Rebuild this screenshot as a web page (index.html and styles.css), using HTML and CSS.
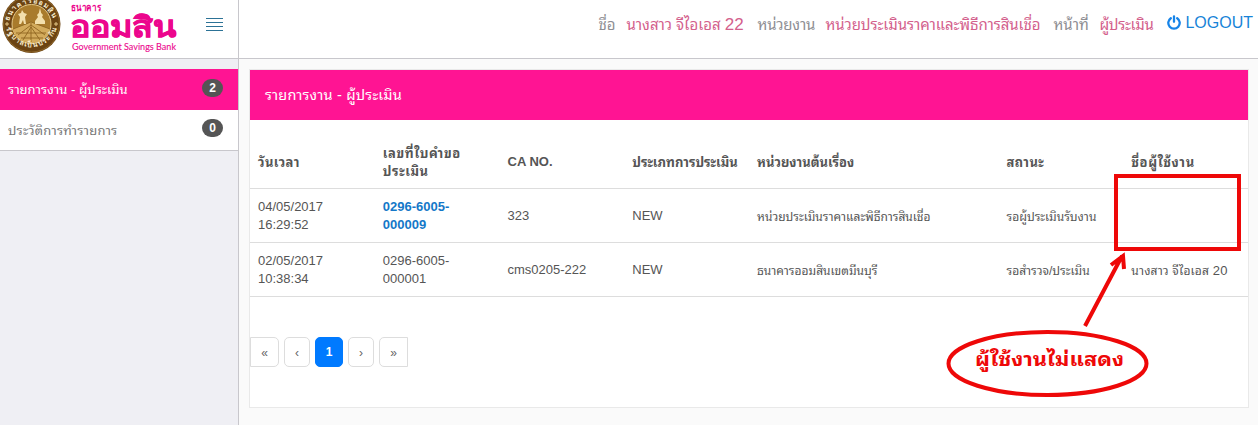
FILE: index.html
```
<!DOCTYPE html>
<html lang="th">
<head>
<meta charset="utf-8">
<title>รายการงาน - ผู้ประเมิน</title>
<link rel="stylesheet" href="styles.css">
</head>
<body>
<div class="app">
  <header class="topbar">
    <div class="brand">
      <svg class="logo" width="190" height="58" viewBox="0 0 190 58">
        <defs>
          <path id="ringTop" d="M9.500 21 A22.500 22.500 0 0 1 53.500 21"/>
          <path id="ringBottom" d="M6 28 A26.500 26.500 0 0 0 57 28"/>
        </defs>
        <circle cx="31.500" cy="24" r="29" fill="#6b4313"/>
        <circle cx="31.500" cy="24" r="28" fill="none" stroke="#8d6529" stroke-width="1"/>
        <circle cx="31.500" cy="24" r="19.500" fill="#a97b2c" stroke="#e5c888" stroke-width="1"/>
        <path d="M13 29l18-7 19 7q-2 13-18 14-16-1-19-14z" fill="#d3ab5c"/>
        <path d="M13 29l18-7 19 7M18 35l13-10 14 10M23 40l8-13 9 13M31 23v20M16 33l30 0M21 38h22" fill="none" stroke="#8f6420" stroke-width=".9"/>
        <path d="M22 10l2 3 3 1-2 3 1 7h-2l-1-4-2 4h-2l1-7-2-3 3-1z" fill="#f3dfac"/>
        <path d="M40 8l1.200 5 1.800 2-1 2 3 4v3h-10v-3l3-4-1-2 1.800-2z" fill="#f3dfac"/>
        <path d="M5 24h4M7 22v4M54 24h4M56 22v4" stroke="#e5c888"/>
        <text class="ring"><textPath href="#ringTop" textLength="58">ธนาคารออมสิน</textPath></text>
        <text class="ring"><textPath href="#ringBottom" textLength="68">รัฐบาลเป็นประกัน</textPath></text>
        <text class="logo-small" x="71" y="11" textLength="30" lengthAdjust="spacingAndGlyphs">ธนาคาร</text>
        <text class="logo-big" x="70" y="37" textLength="107" lengthAdjust="spacingAndGlyphs">ออมสิน</text>
        <text class="logo-en" x="72" y="50" textLength="104" lengthAdjust="spacingAndGlyphs">Government Savings Bank</text>
      </svg>
      <span class="menu"><i></i><i></i><i></i><i></i></span>
    </div>
    <div class="userbar">
      <span class="label l1">ชื่อ</span><span class="value v1">นางสาว จีไอเอส <em>22</em></span>
      <span class="label l2">หน่วยงาน</span><span class="value v2">หน่วยประเมินราคาและพิธีการสินเชื่อ</span>
      <span class="label l3">หน้าที่</span><span class="value v3">ผู้ประเมิน</span>
      <a class="logout"><svg width="14" height="15" viewBox="0 0 14 15" fill="none" stroke="#1784e8" stroke-width="2.300" stroke-linecap="round"><path d="M3.800 3.200A5.700 5.700 0 1 0 10.200 3.200M7 1.300v5.500"/></svg><span>LOGOUT</span></a>
    </div>
  </header>
  <div class="body">
    <nav class="side">
      <a class="item active"><span class="s1">รายการงาน - ผู้ประเมิน</span><b>2</b></a>
      <a class="item"><span class="s2">ประวัติการทำรายการ</span><b>0</b></a>
    </nav>
    <main class="main">
      <section class="panel">
        <h1 class="title"><span>รายการงาน - ผู้ประเมิน</span></h1>
        <div class="table">
          <div class="row head"><span class="loose low">วันเวลา</span><span class="wide low">เลขที่ใบคำขอ<br>ประเมิน</span><span>CA NO.</span><span class="low">ประเภทการประเมิน</span><span class="low">หน่วยงานต้นเรื่อง</span><span class="loose low">สถานะ</span><span class="wide low">ชื่อผู้ใช้งาน</span></div>
          <div class="row"><span>04/05/2017<br>16:29:52</span><span class="link">0296-6005-<br>000009</span><span>323</span><span>NEW</span><span class="th low">หน่วยประเมินราคาและพิธีการสินเชื่อ</span><span class="th low">รอผู้ประเมินรับงาน</span><span></span></div>
          <div class="row"><span>02/05/2017<br>10:38:34</span><span>0296-6005-<br>000001</span><span>cms0205-222</span><span>NEW</span><span class="th low">ธนาคารออมสินเขตมีนบุรี</span><span class="th low">รอสำรวจ/ประเมิน</span><span class="th low name">นางสาว จีไอเอส <em>20</em></span></div>
        </div>
        <div class="pages"><a class="first">«</a><a>‹</a><a class="on">1</a><a>›</a><a class="last">»</a></div>
      </section>
    </main>
  </div>
  <svg class="note" width="310" height="230" viewBox="0 0 310 230" fill="none" stroke="#ee0808" stroke-width="4">
    <rect x="176" y="6" width="123" height="73"/>
    <path d="M145 156L182 86M171 95l12-9 1 13"/>
    <ellipse cx="107.500" cy="193.500" rx="99" ry="31.500"/>
    <text class="note-text" x="35" y="196" textLength="149" lengthAdjust="spacingAndGlyphs">ผู้ใช้งานไม่แสดง</text>
  </svg>
</div>
</body>
</html>
```
FILE: styles.css
```
* { box-sizing: border-box; }
body { margin: 0; background: #fafafa; font-family: "Liberation Sans", "Noto Sans Thai Looped", "Loma", "Waree", "Garuda", "Noto Sans Thai", sans-serif; font-size: 13px; color: #555; }
.app { position: relative; height: 425px; overflow: hidden; display: flex; flex-direction: column; }
.topbar { height: 59px; flex: none; display: flex; background: #fff; border-bottom: 1px solid #c8c7cc; }
.brand { width: 239px; height: 58px; display: flex; border-right: 1px solid #c8c7cc; }
.logo { display: block; flex: none; }
.logo text { fill: #ec068d; font-family: "Liberation Sans", sans-serif; }
.logo text.ring { fill: #f7eccf; font-size: 7px; font-weight: bold; }
.logo .logo-small { font-size: 10px; font-weight: bold; }
.logo .logo-big { font-size: 29px; font-weight: bold; stroke: #ec068d; stroke-width: .6; }
.logo text.logo-en { font-family: Lato, "Liberation Sans", sans-serif; font-size: 9.5px; stroke: #ec068d; stroke-width: .1; }
.menu { width: 17px; margin: 18px 0 0 16px; display: flex; flex-direction: column; gap: 3px; }
.menu i { height: 1px; background: #2c7296; }
.userbar { flex: 1; display: flex; align-items: center; justify-content: flex-end; height: 45px; padding-right: 5px; font-size: 15px; white-space: nowrap; }
.label { color: #8e8e93; }
.value { color: #d3608c; }
.value em { font-style: normal; font-size: 17px; letter-spacing: 0; }
.l1 { width: 28px; }
.v1 { width: 131px; }
.l2 { width: 68px; letter-spacing: -.2px; }
.v2 { width: 228px; letter-spacing: -.07px; }
.l3 { width: 46px; }
.v3 { width: 68px; letter-spacing: -.3px; }
.logout { display: flex; align-items: center; gap: 4px; color: #1784d8; font-size: 16px; }
.body { flex: 1; display: flex; min-height: 0; }
.side { width: 239px; flex: none; padding-top: 10px; background: #efeff4; border-right: 1px solid #c8c7cc; }
.item { display: flex; justify-content: space-between; height: 40px; padding: 8px 15px 0 8px; background: #fff; color: #777; line-height: 26px; }
.item.active { height: 41px; background: #ff1493; color: #fff; }
.item:last-child { height: 41px; border-bottom: 1px solid #c8c7cc; }
.s2 { letter-spacing: .18px; }
.item b { height: 18px; width: 21px; margin-top: 2px; border-radius: 9px; background: #555; color: #fff; font-size: 12px; line-height: 18px; text-align: center; }
.item:last-child b { margin-top: 1px; }
.main { flex: 1; padding: 10px 9px 17px 10px; }
.panel { height: 339px; background: #fff; border: 1px solid #e9e9e9; }
.title { height: 50px; margin: 0; padding-left: 15px; background: #ff1493; color: #fff; font-size: 14.5px; letter-spacing: .18px; font-weight: normal; line-height: 50px; }
.row { display: grid; grid-template-columns: repeat(4, 124.75px) 249.5px 124.75px 124.75px; align-items: center; height: 54px; border-bottom: 1px solid #ddd; line-height: 18px; white-space: nowrap; }
.row > span { padding-left: 8px; }
.row.head { height: 69px; padding-top: 15px; font-weight: bold; }
.row > .low { padding-top: 2px; }
.loose { letter-spacing: .4px; }
.wide { letter-spacing: .6px; }
.th { font-size: 12px; }
.name { letter-spacing: .2px; }
.name em { font-style: normal; font-size: 13px; }
.link { color: #1478c8; font-weight: bold; }
.pages { display: flex; gap: 5px; margin-top: 40px; }
.pages a { width: 26px; height: 30px; border: 1px solid #ddd; border-radius: 5px; font-size: 12px; line-height: 30px; text-align: center; color: #666; }
.pages .first { width: 29px; border-radius: 0 5px 5px 0; }
.pages .last { width: 29px; border-radius: 5px 0 0 5px; }
.pages .on { width: 28px; background: #007aff; border-color: #007aff; color: #fff; font-weight: bold; line-height: 28px; }
.note { position: absolute; left: 940px; top: 170px; }
.note-text { font-size: 19px; font-weight: bold; fill: #ee0808; stroke: none; }
```
